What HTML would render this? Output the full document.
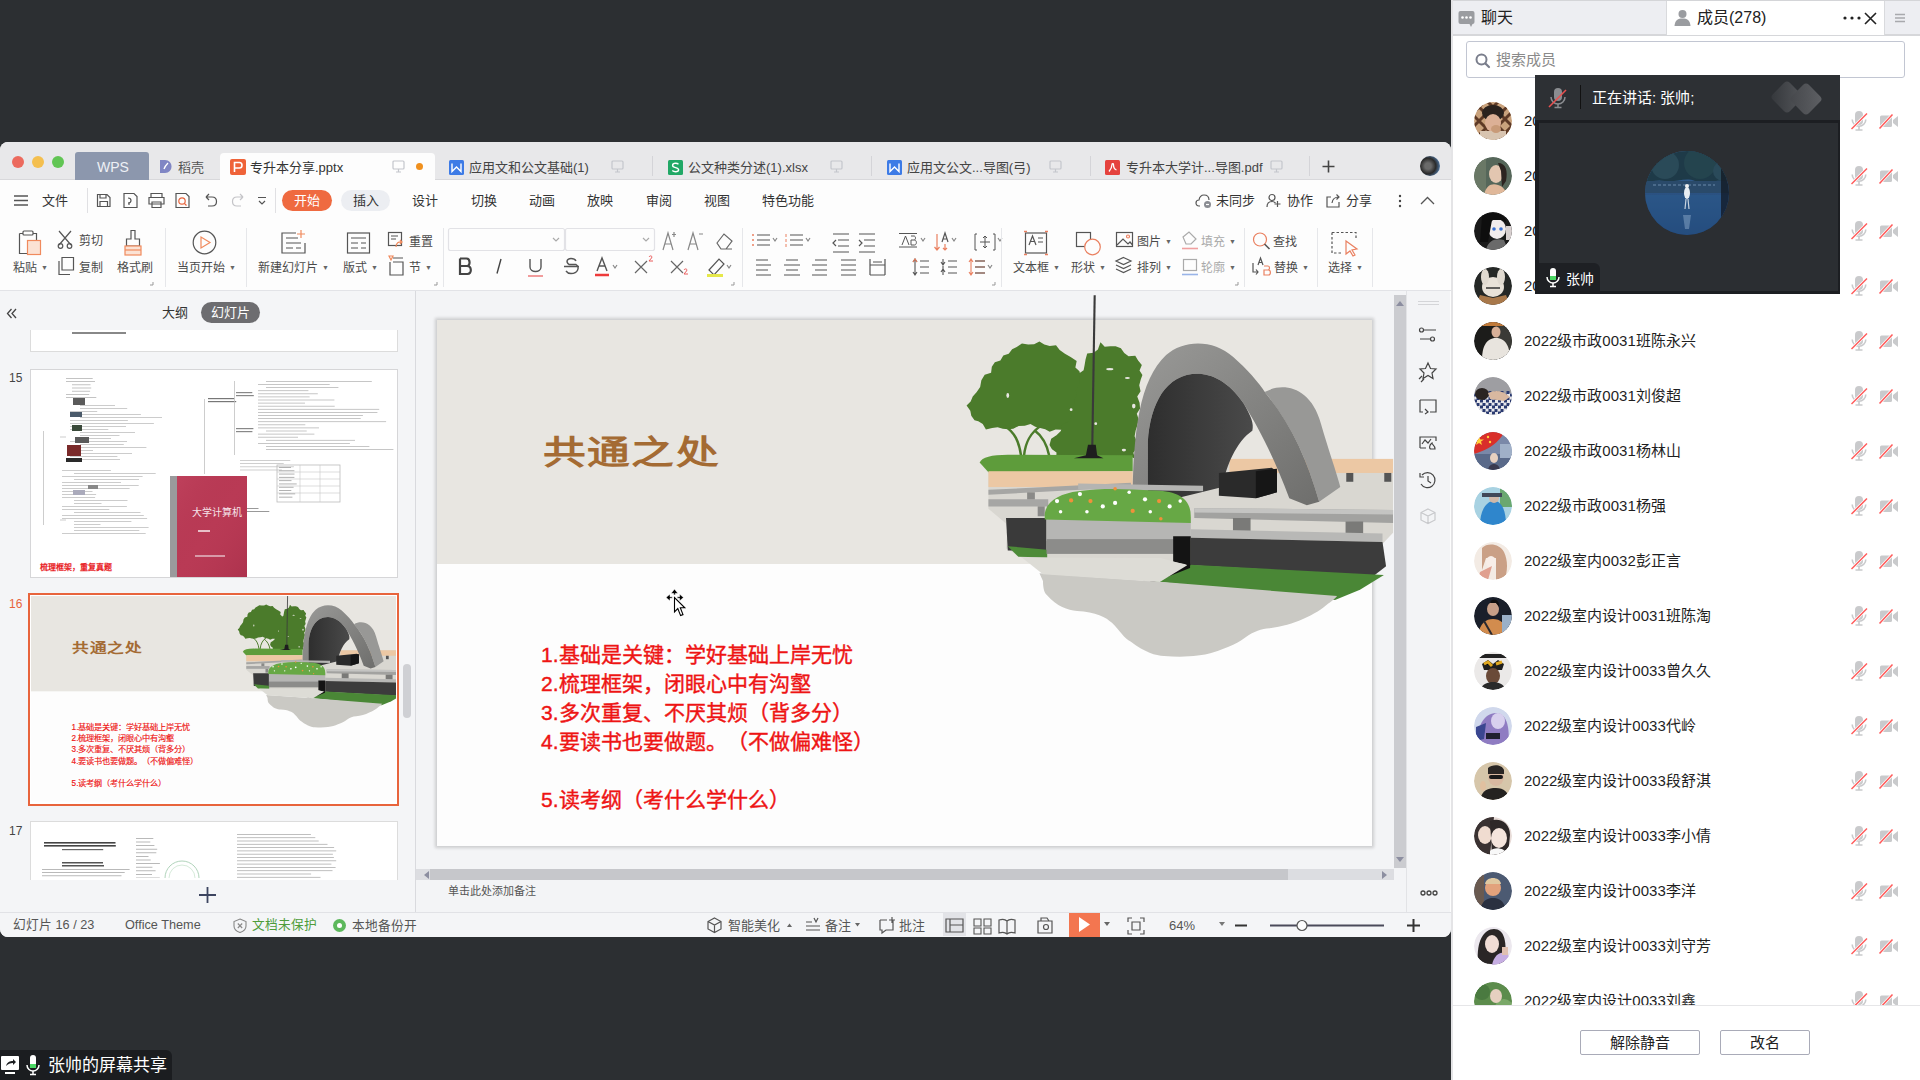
<!DOCTYPE html>
<html lang="zh-CN"><head><meta charset="utf-8">
<style>
*{box-sizing:border-box;margin:0;padding:0}
html,body{text-spacing-trim:space-all;width:1920px;height:1080px;overflow:hidden;background:#2c2f32;font-family:"Liberation Sans",sans-serif;color:#333}
.a{position:absolute}
.t{position:absolute;white-space:nowrap;line-height:1}
/* WPS window */
#win{position:absolute;left:0;top:142px;width:1451px;height:795px;background:#fdfdfd;border-radius:8px 8px 8px 8px;overflow:hidden}
#tabbar{left:0;top:0;width:1451px;height:38px;background:#e9e9eb;border-bottom:1px solid #d9d9dc}
.dot{position:absolute;width:12px;height:12px;border-radius:50%;top:14px}
.tab{position:absolute;top:11px;height:27px;font-size:13px;color:#444}
.sep{position:absolute;width:1px;background:#ddd}
#ribbon{left:0;top:38px;width:1451px;height:111px;background:#fdfdfd;border-bottom:1px solid #e3e4e8}
.m{font-size:13px;color:#333}
.rb{font-size:12px;color:#4a4a4a}
#leftp{left:0;top:150px;width:415px;height:620px;background:#f4f5f7;border-right:1px solid #dcdde1}
#canvas{left:416px;top:150px;width:990px;height:620px;background:#f3f4f6}
#rtool{left:1406px;top:150px;width:45px;height:620px;background:#f3f4f6;border-left:1px solid #e1e2e6}
#status{left:0;top:770px;width:1451px;height:25px;background:#f5f6f8;border-top:1px solid #e3e4e8}
.dd{font-size:7px;color:#666;vertical-align:2px;margin-left:4px}
.st{font-size:12.7px;color:#555}
/* right panel */
#rp{left:1451px;top:0;width:469px;height:1080px;background:#fff;}

.av{position:absolute;left:23px;top:0;width:38px;height:38px;border-radius:50%;overflow:hidden}
.nm{position:absolute;left:73px;font-size:15px;color:#1f1f1f;white-space:nowrap;line-height:1}
</style></head><body>

<svg width="0" height="0" style="position:absolute">
 <defs>
  <g id="ic">
   <rect x="15" y="10" width="8" height="14" rx="4" fill="#c9cacc"/>
   <path d="M12.2 18.5a6.8 6.8 0 0 0 13.6 0" fill="none" stroke="#c9cacc" stroke-width="1.6"/>
   <path d="M19 25.5V28.5M15.5 29H22.5" stroke="#c9cacc" stroke-width="1.6"/>
   <path d="M11.5 28L27 12.5" stroke="#fff" stroke-width="3"/>
   <path d="M11.5 28L27 12.5" stroke="#ff5a5a" stroke-width="1.5"/>
   <rect x="40" y="14.5" width="12" height="11.5" rx="1.5" fill="#c9cacc"/>
   <path d="M53 19L58 15V26L53 22Z" fill="#c9cacc"/>
   <path d="M39.5 27.5L52.5 13.5" stroke="#fff" stroke-width="3"/>
   <path d="M39.5 27.5L52.5 13.5" stroke="#ff5a5a" stroke-width="1.5"/>
  </g>
 </defs>
</svg>
<svg width="0" height="0" style="position:absolute">
 <defs>
  <filter id="grain" x="0" y="0" width="100%" height="100%"><feTurbulence type="fractalNoise" baseFrequency="0.9" numOctaves="1" result="n"/><feColorMatrix type="saturate" values="0"/><feComponentTransfer><feFuncA type="linear" slope="0.25"/></feComponentTransfer><feComposite in2="SourceGraphic" operator="in"/><feBlend in="SourceGraphic" mode="multiply"/></filter>
  <linearGradient id="archg" x1="0" y1="0" x2="1" y2="1"><stop offset="0" stop-color="#9a9a98"/><stop offset="1" stop-color="#6e6e6c"/></linearGradient>
  <linearGradient id="darkg" x1="0" y1="0" x2="1" y2="0"><stop offset="0" stop-color="#2e2e2e"/><stop offset="1" stop-color="#4a4a4a"/></linearGradient>
  <linearGradient id="bookg" x1="0" y1="0" x2="1" y2="1"><stop offset="0" stop-color="#c24560" stop-opacity=".6"/><stop offset=".5" stop-color="#b0354f" stop-opacity="0"/><stop offset="1" stop-color="#a02a45" stop-opacity=".5"/></linearGradient>
  <g id="illus">
   <!-- base ground -->
   <path d="M95 515 L505 515 L505 480 L1245 480 L1245 690 L1212 725 L1225 785 L1190 812 L190 760 L145 735 L150 668 L95 622 Z" fill="#d9d7d1"/>
   <!-- trees -->
   <path d="M32.9 328.1 L44.5 317.0 L50.4 302.4 L61.2 290.8 L71.5 276.0 L74.9 256.6 L84.4 241.1 L102.6 235.2 L104.7 218.1 L113.2 205.4 L129.0 200.7 L137.3 185.9 L152.7 181.4 L162.3 168.5 L175.4 161.9 L190.2 151.7 L207.9 154.8 L224.8 154.5 L239.9 146.3 L253.8 154.7 L269.2 159.3 L287.1 156.8 L297.5 170.7 L312.5 181.3 L328.6 190.6 L345.8 202.0 L342.1 220.3 L353.7 230.8 L357.1 244.9 L359.5 259.6 L366.1 272.9 L367.9 287.8 L379.5 300.1 L372.3 314.6 L375.8 330.1 L367.4 344.4 L368.5 356.0 L363.4 374.9 L350.7 385.2 L335.5 395.9 L318.0 387.5 L302.6 396.9 L286.0 396.2 L269.1 402.6 L256.3 395.4 L242.0 392.5 L228.1 388.5 L214.6 380.9 L198.4 385.9 L180.8 386.6 L165.5 394.6 L151.0 396.1 L135.8 394.6 L121.1 390.2 L105.4 392.1 L87.9 396.2 L78.9 380.8 L66.2 372.8 L55.4 370.2 L46.3 357.7 L43.5 343.1Z" fill="#4b7b2b"/><path d="M351.3 238.3 L365.5 228.2 L368.4 212.9 L371.0 197.5 L375.7 180.6 L394.1 178.2 L406.1 169.3 L413.4 148.4 L425.5 161.6 L441.3 159.8 L456.6 159.7 L471.5 165.5 L481.0 179.2 L493.3 188.4 L512.3 186.6 L520.4 200.3 L531.0 212.8 L524.5 228.6 L532.6 241.5 L527.7 255.1 L523.6 270.9 L527.4 288.0 L517.9 302.8 L524.6 320.3 L525.9 336.7 L516.6 351.8 L522.5 368.8 L518.2 384.5 L513.3 400.0 L510.5 415.6 L516.8 431.2 L518.4 446.8 L506.9 462.4 L512.0 480.6 L497.2 471.6 L482.4 472.4 L467.6 479.7 L452.8 478.6 L438.0 477.7 L423.2 476.0 L408.4 476.7 L393.6 477.2 L378.8 476.3 L364.0 471.8 L349.2 477.9 L334.4 479.0 L319.6 474.9 L304.8 481.7 L287.6 479.4 L288.5 462.0 L275.6 452.5 L268.5 440.4 L273.3 422.4 L288.4 412.6 L300.9 400.7 L304.6 382.6 L321.3 374.3 L331.8 360.4 L327.1 343.7 L338.0 330.4 L338.9 314.9 L345.0 300.5 L343.6 284.6 L351.6 270.6 L355.1 255.7Z" fill="#4b7b2b"/><ellipse cx="150" cy="300" rx="4" ry="7" fill="#e8e6e1"/><ellipse cx="330" cy="340" rx="4" ry="4" fill="#e8e6e1"/><ellipse cx="440" cy="225" rx="10" ry="3" fill="#e8e6e1"/><ellipse cx="490" cy="250" rx="7" ry="3" fill="#e8e6e1"/><ellipse cx="508" cy="330" rx="5" ry="7" fill="#e8e6e1"/><ellipse cx="400" cy="380" rx="4" ry="4" fill="#e8e6e1"/><ellipse cx="480" cy="455" rx="6" ry="4" fill="#e8e6e1"/><path d="M188 472 C182 430 170 405 140 385 M196 472 C200 430 215 405 245 385 M268 472 C262 440 248 415 225 398" stroke="#4b7b2b" stroke-width="7" fill="none"/>
   <path d="M70 490 Q80 468 150 468 L505 470 L505 515 L95 518 Z" fill="#5e9c3b"/>
   <!-- flagpole -->
   <path d="M397 15 L390 455" stroke="#3a3a3a" stroke-width="6"/>
   <path d="M378 440H400L404 470L422 478H338L372 470Z" fill="#1e1e1e"/>
   <!-- sand -->
   <rect x="95" y="515" width="410" height="45" fill="#ecc8a4"/>
   <rect x="780" y="480" width="465" height="40" fill="#ecc8a4"/>
   <!-- arch -->
   <path d="M880 290 C930 262 1010 272 1040 380 C1060 450 1085 520 1095 560 L1035 602 C1000 480 955 380 880 290 Z" fill="#989896"/>
   <path d="M505 615 C505 400 525 255 600 185 C650 140 735 140 790 190 C830 225 862 262 882 292 C955 380 1000 480 1035 602 L1000 612 L950 592 C905 470 862 392 820 322 C780 262 730 238 690 238 C600 238 555 322 548 432 L548 615 Z" fill="url(#archg)"/>
   <path d="M548 612 L548 432 C555 322 600 238 690 238 C730 238 780 262 820 322 C842 360 850 380 845 400 C800 430 770 500 760 560 L700 575 Z" fill="url(#darkg)"/>
   <path d="M750 520 L900 505 L915 515 L915 575 L855 592 L750 585 Z" fill="#2a2a2a"/>
   <path d="M855 515 L915 508 L915 575 L855 592 Z" fill="#161616"/>
   <!-- rails -->
   <path d="M95 568 L500 548 L500 560 L95 582 Z" fill="#a6a6a4"/>
   <path d="M95 595 H265 V615 H95 Z" fill="#a6a6a4"/>
   <rect x="205" y="575" width="22" height="20" fill="#8a8a88"/>
   <rect x="235" y="615" width="20" height="28" fill="#8a8a88"/>
   <path d="M350 550 L705 556 L705 572 L350 566 Z" fill="#b4b4b2"/>
   <path d="M680 620 L1245 625 L1245 662 L680 648 Z" fill="#a2a2a0"/>
   <path d="M680 620 L1245 625 L1245 638 L680 632 Z" fill="#c4c4c2"/>
   <rect x="790" y="648" width="50" height="40" fill="#7a7a78"/>
   <rect x="1110" y="658" width="50" height="45" fill="#7a7a78"/>
   <rect x="1112" y="520" width="20" height="25" fill="#555"/><rect x="1220" y="520" width="20" height="25" fill="#555"/>
   <path d="M670 680 L1215 692 L1215 716 L670 704 Z" fill="#b8b8b6"/>
   <!-- dark ground -->
   <path d="M145 648 L260 648 L260 742 L150 740 Z" fill="#3a3a3a"/>
   <path d="M670 704 L1215 716 L1225 785 L1190 812 L670 782 Z" fill="#3c3c3c"/>
   <path d="M150 728 L262 738 L262 760 L180 758 Z" fill="#4d8b38"/>
   <path d="M554 827 L668 781 L1219 810 L1151 852 L1080 881 L582 830 Z" fill="#4a8736"/>
   <path d="M534 827 L668 776 L668 790 L554 835 Z" fill="#111"/>
   <!-- planter -->
   <rect x="260" y="645" width="410" height="68" fill="#b6b6b4"/>
   <rect x="260" y="708" width="362" height="42" fill="#8c8c8a"/>
   <path d="M620 700 L670 700 L670 782 L620 772 Z" fill="#141414"/>
   <path d="M255 642 C255 600 300 578 350 572 C420 562 500 566 560 570 C625 570 670 588 670 642 L670 662 L255 652 Z" fill="#67a845"/>
   <g fill="#fff"><circle cx="290" cy="600" r="6"/><circle cx="355" cy="580" r="6"/><circle cx="420" cy="615" r="6"/><circle cx="455" cy="605" r="6"/><circle cx="540" cy="595" r="6"/><circle cx="610" cy="615" r="6"/><circle cx="640" cy="600" r="5"/><circle cx="300" cy="630" r="5"/><circle cx="375" cy="630" r="5"/><circle cx="555" cy="630" r="5"/><circle cx="495" cy="575" r="5"/></g>
   <g fill="#f0903a"><circle cx="330" cy="598" r="6"/><circle cx="385" cy="600" r="6"/><circle cx="455" cy="565" r="5"/><circle cx="505" cy="628" r="6"/><circle cx="580" cy="600" r="6"/><circle cx="585" cy="650" r="5"/></g>
   <!-- gravel -->
   <path d="M240 805 L582 829 L1086 870 C1080 878 1070 885 1060 892 C1030 920 960 955 895 961 C870 962 850 970 827 986 C810 1000 780 1015 728 1032 C700 1040 650 1045 594 1040 C570 1040 540 1030 500 1000 C480 990 470 970 446 946 C430 930 400 915 347 912 C320 910 290 900 261 867 C255 862 250 850 250 827 Z" fill="#cac9c4"/>
   <path d="M190 760 L585 762 L660 782 L582 830 L250 808 Z" fill="#dddcd6"/>
  </g>
  <g id="slide">
   <rect x="0" y="0" width="935" height="526" fill="#fdfdfd"/>
   <rect x="0" y="0" width="935" height="244" fill="#e8e6e1"/>
   <text transform="translate(106,144) scale(1.22,0.95)" x="0" y="0" font-family="Liberation Serif,serif" font-weight="bold" font-size="35" letter-spacing="1.5" fill="#a46b33">共通之处</text>
   <g font-family="Liberation Sans,sans-serif" font-size="21" fill="#ee1414" stroke="#ee1414" stroke-width="0.4">
    <text x="104" y="342">1.基础是关键：学好基础上岸无忧</text>
    <text x="104" y="371">2.梳理框架，闭眼心中有沟壑</text>
    <text x="104" y="400">3.多次重复、不厌其烦（背多分）</text>
    <text x="104" y="429">4.要读书也要做题。（不做偏难怪）</text>
    <text x="104" y="487">5.读考纲（考什么学什么）</text>
   </g>
   <g transform="translate(518,-30) scale(0.35186)"><use href="#illus"/></g>
  </g>
 </defs>
</svg>
<!-- WPS window -->
<div class="a" style="left:0;top:142px;width:1451px;height:795px;background:#fdfdfd;border-radius:8px"></div>
<!-- tab bar -->
<div class="a" style="left:0;top:142px;width:1451px;height:38px;background:#e8e8ea;border-radius:8px 8px 0 0;border-bottom:1px solid #d8d8db"></div>
<div class="dot" style="left:12px;top:156px;background:#ec6a5e"></div>
<div class="dot" style="left:32px;top:156px;background:#f4bf4f"></div>
<div class="dot" style="left:52px;top:156px;background:#61c554"></div>
<div class="a" style="left:75px;top:152px;width:74px;height:28px;background:#8c97ad;border-radius:3px 3px 0 0"></div>
<div class="t" style="left:97px;top:160px;font-size:14px;color:#eef0f5">WPS</div>
<svg class="a" style="left:159px;top:159px" width="13" height="15" viewBox="0 0 13 15"><path d="M1 1H6C10 1 12.5 4 12.5 7.5S10 14 6 14H1Z" fill="#8086c4"/><path d="M5 10C6 7 8 5 9 4" stroke="#fff" stroke-width="1.3" fill="none"/></svg>
<div class="t" style="left:178px;top:161px;font-size:13px;color:#555">稻壳</div>
<div class="a" style="left:220px;top:153px;width:215px;height:28px;background:#fdfdfd;border-radius:4px 4px 0 0"></div>
<div class="a" style="left:230px;top:159px;width:16px;height:16px;background:#ef6339;border-radius:2px"></div>
<svg class="a" style="left:230px;top:159px" width="16" height="16" viewBox="0 0 16 16"><path d="M4.5 13V3.5H9.5C11.5 3.5 12 5 12 6.3S11.3 9 9.5 9H4.5" fill="none" stroke="#fff" stroke-width="1.6"/></svg>
<div class="t" style="left:250px;top:161px;font-size:13px;color:#333">专升本分享.pptx</div>
<svg class="a" style="left:392px;top:160px" width="13" height="13" viewBox="0 0 13 13"><rect x="1" y="1" width="11" height="8" rx="1" fill="none" stroke="#c4c6cc" stroke-width="1.2"/><path d="M6.5 9V12M4 12H9" stroke="#c4c6cc" stroke-width="1.2"/></svg>
<div class="a" style="left:416px;top:163px;width:7px;height:7px;border-radius:50%;background:#f0901e"></div>
<!-- tab 3 -->
<svg class="a" style="left:449px;top:160px" width="15" height="15" viewBox="0 0 15 15"><rect width="15" height="15" rx="1.5" fill="#3d7be6"/><path d="M3 3.5V11.5L7.5 7L12 11.5V3.5" fill="none" stroke="#fff" stroke-width="1.4"/></svg>
<div class="t" style="left:469px;top:161px;font-size:13px;color:#444">应用文和公文基础(1)</div>
<svg class="a" style="left:611px;top:160px" width="13" height="13" viewBox="0 0 13 13"><rect x="1" y="1" width="11" height="8" rx="1" fill="none" stroke="#c4c6cc" stroke-width="1.2"/><path d="M6.5 9V12M4 12H9" stroke="#c4c6cc" stroke-width="1.2"/></svg>
<div class="sep" style="left:652px;top:156px;height:20px;background:#d4d4d8"></div>
<!-- tab 4 -->
<svg class="a" style="left:668px;top:160px" width="15" height="15" viewBox="0 0 15 15"><rect width="15" height="15" rx="1.5" fill="#21a866"/><path d="M10.5 4.2C9.8 3.6 9 3.3 7.6 3.3C5.8 3.3 4.6 4.1 4.6 5.4C4.6 8.3 10.6 6.9 10.6 9.8C10.6 11.1 9.3 11.8 7.5 11.8C6 11.8 5 11.3 4.3 10.6" fill="none" stroke="#fff" stroke-width="1.4"/></svg>
<div class="t" style="left:688px;top:161px;font-size:13px;color:#444">公文种类分述(1).xlsx</div>
<svg class="a" style="left:830px;top:160px" width="13" height="13" viewBox="0 0 13 13"><rect x="1" y="1" width="11" height="8" rx="1" fill="none" stroke="#c4c6cc" stroke-width="1.2"/><path d="M6.5 9V12M4 12H9" stroke="#c4c6cc" stroke-width="1.2"/></svg>
<div class="sep" style="left:871px;top:156px;height:20px;background:#d4d4d8"></div>
<!-- tab 5 -->
<svg class="a" style="left:887px;top:160px" width="15" height="15" viewBox="0 0 15 15"><rect width="15" height="15" rx="1.5" fill="#3d7be6"/><path d="M3 3.5V11.5L7.5 7L12 11.5V3.5" fill="none" stroke="#fff" stroke-width="1.4"/></svg>
<div class="t" style="left:907px;top:161px;font-size:13px;color:#444">应用文公文...导图(弓)</div>
<svg class="a" style="left:1049px;top:160px" width="13" height="13" viewBox="0 0 13 13"><rect x="1" y="1" width="11" height="8" rx="1" fill="none" stroke="#c4c6cc" stroke-width="1.2"/><path d="M6.5 9V12M4 12H9" stroke="#c4c6cc" stroke-width="1.2"/></svg>
<div class="sep" style="left:1090px;top:156px;height:20px;background:#d4d4d8"></div>
<!-- tab 6 -->
<svg class="a" style="left:1105px;top:160px" width="15" height="15" viewBox="0 0 15 15"><rect width="15" height="15" rx="1.5" fill="#e5423e"/><path d="M4 11.5C6 9 7 7 7 4.5C7 3.5 8.5 3.5 8.5 4.5C8.5 7 10 9.5 11.5 10" fill="none" stroke="#fff" stroke-width="1.3"/></svg>
<div class="t" style="left:1126px;top:161px;font-size:13px;color:#444">专升本大学计...导图.pdf</div>
<svg class="a" style="left:1270px;top:160px" width="13" height="13" viewBox="0 0 13 13"><rect x="1" y="1" width="11" height="8" rx="1" fill="none" stroke="#c4c6cc" stroke-width="1.2"/><path d="M6.5 9V12M4 12H9" stroke="#c4c6cc" stroke-width="1.2"/></svg>
<div class="sep" style="left:1309px;top:156px;height:20px;background:#d4d4d8"></div>
<svg class="a" style="left:1322px;top:160px" width="13" height="13" viewBox="0 0 13 13"><path d="M6.5 0.5V12.5M0.5 6.5H12.5" stroke="#444" stroke-width="1.6"/></svg>
<div class="a" style="left:1420px;top:156px;width:20px;height:20px;border-radius:50%;background:radial-gradient(circle at 40% 50%,#6a6a6a 0 20%,#2a2a2a 50%,#5a8ac0 85%)"></div>
<!-- menu row -->
<svg class="a" style="left:14px;top:195px" width="14" height="11" viewBox="0 0 14 11"><path d="M0 1H14M0 5.5H14M0 10H14" stroke="#555" stroke-width="1.3"/></svg>
<div class="t m" style="left:42px;top:194px">文件</div>
<div class="sep" style="left:87px;top:188px;height:25px;background:#e0e0e3"></div>
<svg class="a" style="left:96px;top:192px" width="180" height="17" viewBox="0 0 180 17" fill="none" stroke="#555" stroke-width="1.2">
 <path d="M1.5 2.5H11L14 5.5V14.5H1.5Z M4 2.5V6H10V2.5 M4 14.5V9.5H11.5V14.5"/>
 <path d="M28 1.5H38L41 4.5V15.5H28Z M32 6C34 6 35 7 35 8.5S34 11 32 11 M33 11L33 13" stroke="#555"/>
 <path d="M55 5.5V1.5H66V5.5 M53 5.5H68V12H53Z M56 10H65V15.5H56Z"/>
 <path d="M80 1.5H90L93 4.5V15.5H80Z"/><circle cx="86" cy="9" r="3.2" stroke="#e8643c"/><path d="M88.3 11.3L90.5 13.5" stroke="#e8643c"/>
 <path d="M110 5H116C119 5 120.5 7 120.5 9.5S119 14 116 14H112 M110 5L113 2M110 5L113 8"/>
 <path d="M147 5H141C138 5 136.5 7 136.5 9.5S138 14 141 14H145 M147 5L144 2M147 5L144 8" stroke="#c4c4c8"/>
 <path d="M162 5.5H170M163 9L166 12L169 9" stroke="#555"/>
</svg>
<div class="sep" style="left:275px;top:188px;height:25px;background:#e0e0e3"></div>
<div class="a" style="left:282px;top:190px;width:50px;height:21px;border-radius:11px;background:#ef6a40"></div>
<div class="t m" style="left:294px;top:194px;color:#fff">开始</div>
<div class="a" style="left:341px;top:190px;width:49px;height:21px;border-radius:11px;background:#eceef2"></div>
<div class="t m" style="left:353px;top:194px">插入</div>
<div class="t m" style="left:412px;top:194px">设计</div>
<div class="t m" style="left:471px;top:194px">切换</div>
<div class="t m" style="left:529px;top:194px">动画</div>
<div class="t m" style="left:587px;top:194px">放映</div>
<div class="t m" style="left:646px;top:194px">审阅</div>
<div class="t m" style="left:704px;top:194px">视图</div>
<div class="t m" style="left:762px;top:194px">特色功能</div>
<svg class="a" style="left:1195px;top:193px" width="18" height="16" viewBox="0 0 18 16" fill="none" stroke="#555" stroke-width="1.2"><path d="M5 13H4C2 13 1 11.5 1 10S2 7 4 7C4.5 4 6.5 2 9 2C12 2 14 4 14 7"/><circle cx="12.5" cy="11.5" r="3.5" fill="#8a8c92" stroke="none"/><path d="M11 11.5H14" stroke="#fff"/></svg>
<div class="t m" style="left:1216px;top:194px">未同步</div>
<svg class="a" style="left:1266px;top:193px" width="15" height="15" viewBox="0 0 15 15" fill="none" stroke="#555" stroke-width="1.2"><circle cx="6" cy="4.5" r="3"/><path d="M1 14C1 10 3 8.5 6 8.5C7.5 8.5 8.5 9 9.5 10"/><path d="M11.5 8V14M8.5 11H14.5"/></svg>
<div class="t m" style="left:1287px;top:194px">协作</div>
<svg class="a" style="left:1325px;top:193px" width="16" height="15" viewBox="0 0 16 15" fill="none" stroke="#555" stroke-width="1.2"><path d="M6 4H2V14H14V9"/><path d="M7 10C7.5 6 10 4 14 4M11.5 1.5L14 4L11.5 6.5"/></svg>
<div class="t m" style="left:1346px;top:194px">分享</div>
<svg class="a" style="left:1398px;top:194px" width="4" height="14" viewBox="0 0 4 14"><circle cx="2" cy="2" r="1.2" fill="#444"/><circle cx="2" cy="7" r="1.2" fill="#444"/><circle cx="2" cy="12" r="1.2" fill="#444"/></svg>
<svg class="a" style="left:1420px;top:196px" width="15" height="9" viewBox="0 0 15 9"><path d="M1 8L7.5 1.5L14 8" fill="none" stroke="#555" stroke-width="1.3"/></svg>
<!-- ribbon -->
<div class="a" style="left:0;top:290px;width:1451px;height:1px;background:#e2e3e7"></div>
<svg class="a" style="left:0;top:222px" width="1451" height="68" viewBox="0 222 1451 68" fill="none" stroke="#555" stroke-width="1.2">
 <!-- paste -->
 <path d="M19.5 233.5H23M33 233.5H36.5V240 M19.5 233.5V253.5H27" />
 <rect x="23" y="231" width="10" height="4" rx="1"/>
 <rect x="27.5" y="240.5" width="13" height="14" fill="#fbe2d4" stroke="#f08a5d"/>
 <!-- cut -->
 <path d="M59 231L71 245M71 231L59 245"/><circle cx="60.5" cy="246" r="2.3"/><circle cx="69.5" cy="246" r="2.3"/>
 <!-- copy -->
 <path d="M62 257.5H73.5V270H62Z M59 261V274.5H70"/>
 <!-- format brush -->
 <path d="M131 230.5H135V239H139.5V246H126.5V239H131Z" />
 <rect x="125" y="246" width="16" height="9" fill="#fbe2d4" stroke="#f08a5d"/>
 <path d="M125 250H141" stroke="#f08a5d"/>
 <path d="M153 282V285H150" stroke="#999" stroke-width="1"/>
 <!-- play -->
 <circle cx="204.5" cy="242.5" r="11.3"/>
 <path d="M201 237V248L210 242.5Z" stroke="#f08a5d"/>
 <!-- new slide -->
 <path d="M296 233H282V253H305V243"/>
 <path d="M286 238H298M286 243H301M286 248H293M296 248H301"/>
 <path d="M301 230V238M297 234H305" stroke="#f08a5d"/>
 <!-- layout -->
 <rect x="347.5" y="233" width="22" height="20"/><path d="M351 238H366M351 243H358M361 243H366M351 248H358M361 248H366"/>
 <!-- reset -->
 <rect x="388.5" y="232.5" width="13" height="13"/><path d="M391 236H398M391 239H396"/><path d="M396 247C396 243 398.5 241.5 402 242M400 240L402 242L400 244" stroke="#f08a5d"/>
 <!-- section -->
 <path d="M393 258H403M390 262V275H403V262H393" /><path d="M389 256L393 256L391 260Z" stroke="#f08a5d"/>
 <path d="M437 282V285H434" stroke="#999" stroke-width="1"/>
 <!-- font combos -->
 <rect x="448.5" y="228.5" width="116" height="22" rx="2" stroke="#e2e2e6"/>
 <rect x="565.5" y="228.5" width="89" height="22" rx="2" stroke="#e2e2e6"/>
 <path d="M553 238L556 241L559 238M643 238L646 241L649 238" stroke="#aaa"/>
 <path d="M663 250L668 233L673 250M665 244H671M674 232V237M672 234.5H676" stroke="#888"/>
 <path d="M688 250L693 233L698 250M690 244H696M699 234H703" stroke="#888"/>
 <path d="M717 243L724 234L732 241L726 249H721Z M721 249H732" stroke="#666"/>
 <!-- BIUS -->
 <path d="M460 258.5V274H467.5C472 274 472 266 467 266H460M467 266C470.5 266 470.5 258.5 466.5 258.5H460" stroke="#444" stroke-width="2.2"/>
 <path d="M501 259L497 273.5" stroke="#444" stroke-width="1.4"/>
 <path d="M530 259V267C530 273 541 273 541 267V259" stroke="#555" stroke-width="1.4"/><path d="M528 276H543" stroke="#ea5c5c"/>
 <path d="M576 261C575 259 573 258.5 571 258.5C567 258.5 565.5 262 569 264.5H576C580 267 578 273.5 571 273.5C569 273.5 567 272.5 566 271M564 266.5H579" stroke="#555" stroke-width="1.4"/>
 <path d="M597 271L602 258L607 271M599 266H605" stroke="#555" stroke-width="1.4"/><path d="M595 275H609" stroke="#ee3b3b" stroke-width="2.5"/>
 <path d="M613 265L615 268L617 265" stroke="#888"/>
 <path d="M635 261L647 273M647 261L635 273" stroke="#666"/><path d="M649 257C650 255 653 256 651.5 258L649 261H653" stroke="#ea5c5c" stroke-width="1"/>
 <path d="M671 261L683 273M683 261L671 273" stroke="#666"/><path d="M684 270C685 268 688 269 686.5 271L684 274H688" stroke="#ea5c5c" stroke-width="1"/>
 <path d="M709 270L719 259L724 264L714 275Z" stroke="#555"/><path d="M707 275.5H723" stroke="#e6e84a" stroke-width="3"/>
 <path d="M727 265L729 268L731 265" stroke="#888"/>
 <path d="M734 282V285H731" stroke="#999" stroke-width="1"/>
 <!-- paragraph -->
 <path d="M757 235H770M757 240H770M757 245H770" /><path d="M752 235H754M752 240H754M752 245H754" stroke="#ea8060" stroke-width="1.6"/><path d="M773 238L775 241L777 238" stroke="#888"/>
 <path d="M790 235H803M790 240H803M790 245H803"/><path d="M786 234V237M786 239V242M786 244V247" stroke="#ea8060" stroke-width="1"/><path d="M806 238L808 241L810 238" stroke="#888"/>
 <path d="M833 234H849M838 240H849M838 246H849M833 252H849M836 240L833 243L836 246" />
 <path d="M859 234H875M864 240H875M864 246H875M859 252H875M859 240L862 243L859 246" />
 <path d="M899 233.5H917M902 245L905.5 236L909 245M911 236H914C916 236 916 240 914 240H911V245H914.5C917 245 917 240 914.5 240M899 247H917" stroke-width="1"/><path d="M921 238L923 241L925 238" stroke="#888"/>
 <path d="M937 234V250M934.5 247L937 250L939.5 247" stroke="#ea8060"/><path d="M942 242L945 233L948 242M943 239H947" /><path d="M945 244V250M943 248L945 250L947 248" stroke="#ea8060"/><path d="M952 238L954 241L956 238" stroke="#888"/>
 <path d="M977 234H975V250H977M993 234H995V250H993M980 242H990M985 236V248M983 238L985 236L987 238M983 246L985 248L987 246" stroke-width="1"/><path d="M998 238L1000 241L1002 238" stroke="#888"/>
 <path d="M756 260H768M756 265H771M756 270H768M756 275H771"/>
 <path d="M786 260H798M784 265H800M786 270H798M784 275H800"/>
 <path d="M815 260H827M812 265H827M815 270H827M812 275H827"/>
 <path d="M841 260H856M841 265H856M841 270H856M841 275H856"/>
 <path d="M870 259V275M885 259V275M870 275H885M870 265H885M873 262H882"/>
 <path d="M915 259V275M913 262L915 259L917 262M913 272L915 275L917 272M920 261H929M920 267H929M920 273H929" stroke-width="1.1"/><path d="M913 262L915 259L917 262" stroke="#ea8060"/>
 <path d="M943 259V275M941 262L943 265L945 262M941 272L943 269L945 272M948 261H957M948 267H957M948 273H957" stroke-width="1.1"/>
 <path d="M971 259V275M969 262L971 259L973 262M969 272L971 275L973 272M975 261H985M975 267H985M975 273H985" stroke="#ea8060" stroke-width="1.1"/><path d="M975 261H985M975 267H985M975 273H985"/><path d="M988 265L990 268L992 265" stroke="#888"/>
 <path d="M995 282V285H992" stroke="#999" stroke-width="1"/>
 <!-- text box -->
 <rect x="1025.5" y="233" width="21" height="20"/><path d="M1029 245L1032.5 236L1036 245M1030.5 241.5H1034.5M1038 238H1043M1038 242H1043" />
 <path d="M1024 231.5H1027M1045 231.5H1048M1024 254.5H1027M1045 254.5H1048" stroke="#ea8060" stroke-width="1.6"/>
 <!-- shape -->
 <rect x="1076.5" y="232.5" width="14" height="14"/><circle cx="1092.5" cy="247" r="7.8" fill="#fdfdfd" stroke="#ea8060"/>
 <!-- picture/arrange -->
 <rect x="1116.5" y="232.5" width="16" height="14"/><path d="M1117 245L1123 239L1128 244L1130 242L1132.5 245" /><circle cx="1128" cy="236.5" r="1.5" stroke="#ea8060"/>
 <path d="M1123.5 257.5L1131 261L1123.5 264.5L1116 261Z M1116 265L1123.5 268.5L1131 265 M1116 269L1123.5 272.5L1131 269"/>
 <path d="M1183 237L1189 232L1196 239L1191 244H1186Z" stroke="#aaa"/><path d="M1182 248.5H1198" stroke="#f0a0a0" stroke-width="1.6"/>
 <rect x="1183.5" y="259.5" width="13" height="11" stroke="#aaa"/><path d="M1182 274.5H1198" stroke="#99b4e8" stroke-width="1.6"/>
 <path d="M1238 282V285H1235" stroke="#999" stroke-width="1"/>
 <!-- find/replace -->
 <circle cx="1260" cy="239.5" r="6.5" stroke="#ea8060"/><path d="M1264.5 244L1269.5 249" stroke="#555" stroke-width="1.6"/>
 <path d="M1253 263V272H1258M1256 269.5L1258 272L1256 274.5"/><path d="M1258 265L1260.5 258L1263 265M1259 262.5H1262" stroke="#555"/><path d="M1264 266H1268C1270 266 1270 270 1268 270H1264V275H1268.5C1271 275 1271 270 1268.5 270" stroke="#ea8060"/>
 <!-- select -->
 <path d="M1332 232.5H1356V240M1332 232.5V253H1342" stroke="#555" stroke-dasharray="2.5 2"/>
 <path d="M1346 241L1357 249L1352 250L1355 255L1353 256L1350 251L1346 254Z" stroke="#ea8060" fill="#fdfdfd"/>
 <!-- separators -->
 <path d="M165.5 228V287M246.5 228V287M443.5 228V287M742.5 228V287M1001.5 228V287M1244.5 228V287M1317.5 228V287M1372.5 228V287" stroke="#e6e7ea" stroke-width="1"/>
</svg>
<div class="t rb" style="left:13px;top:262px">粘贴<span class="dd">▼</span></div>
<div class="t rb" style="left:79px;top:235px">剪切</div>
<div class="t rb" style="left:79px;top:262px">复制</div>
<div class="t rb" style="left:117px;top:262px">格式刷</div>
<div class="t rb" style="left:177px;top:262px">当页开始<span class="dd">▼</span></div>
<div class="t rb" style="left:258px;top:262px">新建幻灯片<span class="dd">▼</span></div>
<div class="t rb" style="left:343px;top:262px">版式<span class="dd">▼</span></div>
<div class="t rb" style="left:409px;top:236px">重置</div>
<div class="t rb" style="left:409px;top:262px">节<span class="dd">▼</span></div>
<div class="t rb" style="left:1013px;top:262px">文本框<span class="dd">▼</span></div>
<div class="t rb" style="left:1071px;top:262px">形状<span class="dd">▼</span></div>
<div class="t rb" style="left:1137px;top:236px">图片<span class="dd">▼</span></div>
<div class="t rb" style="left:1137px;top:262px">排列<span class="dd">▼</span></div>
<div class="t rb" style="left:1201px;top:236px;color:#aaa">填充<span class="dd">▼</span></div>
<div class="t rb" style="left:1201px;top:262px;color:#aaa">轮廓<span class="dd">▼</span></div>
<div class="t rb" style="left:1273px;top:236px">查找</div>
<div class="t rb" style="left:1274px;top:262px">替换<span class="dd">▼</span></div>
<div class="t rb" style="left:1328px;top:262px">选择<span class="dd">▼</span></div>
<!-- left panel -->
<div class="a" style="left:0;top:291px;width:415px;height:621px;background:#f4f5f7"></div>
<div class="a" style="left:415px;top:291px;width:1px;height:621px;background:#d9dade"></div>
<svg class="a" style="left:6px;top:308px" width="11" height="11" viewBox="0 0 11 11"><path d="M5.5 1L1.5 5.5L5.5 10M10 1L6 5.5L10 10" fill="none" stroke="#444" stroke-width="1.3"/></svg>
<div class="t" style="left:162px;top:306px;font-size:13px;color:#333">大纲</div>
<div class="a" style="left:201px;top:302px;width:59px;height:21px;border-radius:11px;background:#6d6d70"></div>
<div class="t" style="left:211px;top:306px;font-size:13px;color:#fff">幻灯片</div>
<div class="a" style="left:0;top:330px;width:415px;height:550px;overflow:hidden">
 <div class="a" style="left:30px;top:-30px;width:368px;height:52px;background:#fff;border:1px solid #dcdcdc"></div>
  <div class="t" style="left:9px;top:42px;font-size:12px;color:#444">15</div>
 <div class="a" style="left:30px;top:39px;width:368px;height:209px;background:#fff;border:1px solid #d6d6d8"></div>
 <div class="t" style="left:9px;top:268px;font-size:12px;color:#e8643c">16</div>
 <div class="a" style="left:28px;top:263px;width:371px;height:213px;border:2px solid #e8643c;background:#fff"></div>
 <svg class="a" style="left:31px;top:266px;overflow:hidden" width="365" height="207" viewBox="0 0 935 530"><use href="#slide"/></svg>
 <div class="t" style="left:9px;top:495px;font-size:12px;color:#444">17</div>
 <div class="a" style="left:30px;top:491px;width:368px;height:80px;background:#fff;border:1px solid #dcdcdc"></div>
 </div>
<svg class="a" style="left:0;top:0" width="415" height="1080" viewBox="0 0 415 1080"><defs><clipPath id="c15"><rect x="31" y="370" width="366" height="207"/></clipPath><clipPath id="c17"><rect x="31" y="822" width="366" height="56"/></clipPath></defs><g clip-path="url(#c15)"><rect x="66.0" y="378.0" width="26.7" height="0.8" fill="#b4b4b4"/><rect x="66.0" y="381.2" width="29.0" height="0.8" fill="#b4b4b4"/><rect x="72.0" y="384.4" width="18.5" height="0.8" fill="#b4b4b4"/><rect x="72.0" y="387.6" width="19.2" height="0.8" fill="#b4b4b4"/><rect x="72.0" y="390.8" width="18.1" height="0.8" fill="#b4b4b4"/><rect x="66.0" y="394.0" width="23.2" height="0.8" fill="#b4b4b4"/><rect x="66.0" y="397.2" width="30.3" height="0.8" fill="#b4b4b4"/><rect x="80.0" y="405.0" width="35.0" height="0.8" fill="#c0c0c0"/><rect x="80.0" y="408.0" width="47.2" height="0.8" fill="#c0c0c0"/><rect x="70.0" y="411.0" width="27.2" height="0.8" fill="#c0c0c0"/><rect x="80.0" y="414.0" width="60.9" height="0.8" fill="#c0c0c0"/><rect x="80.0" y="417.0" width="82.0" height="0.8" fill="#c0c0c0"/><rect x="70.0" y="420.0" width="57.9" height="0.8" fill="#c0c0c0"/><rect x="70.0" y="423.0" width="83.9" height="0.8" fill="#c0c0c0"/><rect x="70.0" y="426.0" width="56.0" height="0.8" fill="#c0c0c0"/><rect x="70.0" y="429.0" width="38.3" height="0.8" fill="#c0c0c0"/><rect x="80.0" y="432.0" width="55.0" height="0.8" fill="#c0c0c0"/><rect x="80.0" y="435.0" width="39.5" height="0.8" fill="#c0c0c0"/><rect x="80.0" y="438.0" width="31.0" height="0.8" fill="#c0c0c0"/><rect x="70.0" y="441.0" width="57.0" height="0.8" fill="#c0c0c0"/><rect x="80.0" y="444.0" width="43.8" height="0.8" fill="#c0c0c0"/><rect x="80.0" y="447.0" width="66.4" height="0.8" fill="#c0c0c0"/><rect x="70.0" y="450.0" width="23.0" height="0.8" fill="#c0c0c0"/><rect x="80.0" y="453.0" width="52.0" height="0.8" fill="#c0c0c0"/><rect x="70.0" y="456.0" width="47.4" height="0.8" fill="#c0c0c0"/><rect x="70.0" y="459.0" width="50.0" height="0.8" fill="#c0c0c0"/><rect x="62.0" y="470.0" width="48.9" height="0.8" fill="#c0c0c0"/><rect x="74.0" y="473.0" width="81.7" height="0.8" fill="#c0c0c0"/><rect x="62.0" y="476.0" width="80.6" height="0.8" fill="#c0c0c0"/><rect x="74.0" y="479.0" width="65.0" height="0.8" fill="#c0c0c0"/><rect x="62.0" y="482.0" width="59.0" height="0.8" fill="#c0c0c0"/><rect x="62.0" y="485.0" width="76.7" height="0.8" fill="#c0c0c0"/><rect x="62.0" y="488.0" width="67.6" height="0.8" fill="#c0c0c0"/><rect x="62.0" y="491.0" width="30.5" height="0.8" fill="#c0c0c0"/><rect x="62.0" y="494.0" width="34.1" height="0.8" fill="#c0c0c0"/><rect x="62.0" y="497.0" width="33.1" height="0.8" fill="#c0c0c0"/><rect x="74.0" y="500.0" width="53.5" height="0.8" fill="#c0c0c0"/><rect x="74.0" y="503.0" width="27.5" height="0.8" fill="#c0c0c0"/><rect x="62.0" y="506.0" width="64.9" height="0.8" fill="#c0c0c0"/><rect x="62.0" y="509.0" width="47.3" height="0.8" fill="#c0c0c0"/><rect x="74.0" y="512.0" width="66.5" height="0.8" fill="#c0c0c0"/><rect x="62.0" y="515.0" width="81.8" height="0.8" fill="#c0c0c0"/><rect x="62.0" y="518.0" width="85.1" height="0.8" fill="#c0c0c0"/><rect x="74.0" y="521.0" width="57.4" height="0.8" fill="#c0c0c0"/><rect x="74.0" y="524.0" width="26.5" height="0.8" fill="#c0c0c0"/><rect x="74.0" y="527.0" width="74.6" height="0.8" fill="#c0c0c0"/><rect x="74.0" y="530.0" width="65.3" height="0.8" fill="#c0c0c0"/><rect x="62.0" y="533.0" width="83.7" height="0.8" fill="#c0c0c0"/><rect x="266.0" y="381.0" width="105.8" height="0.8" fill="#b8b8b8"/><rect x="258.0" y="384.1" width="71.7" height="0.8" fill="#b8b8b8"/><rect x="266.0" y="387.2" width="72.4" height="0.8" fill="#b8b8b8"/><rect x="258.0" y="390.3" width="50.4" height="0.8" fill="#b8b8b8"/><rect x="258.0" y="393.4" width="59.8" height="0.8" fill="#b8b8b8"/><rect x="258.0" y="396.5" width="51.6" height="0.8" fill="#b8b8b8"/><rect x="258.0" y="399.6" width="76.4" height="0.8" fill="#b8b8b8"/><rect x="258.0" y="402.7" width="47.0" height="0.8" fill="#b8b8b8"/><rect x="258.0" y="405.8" width="76.7" height="0.8" fill="#b8b8b8"/><rect x="258.0" y="408.9" width="121.2" height="0.8" fill="#b8b8b8"/><rect x="258.0" y="412.0" width="119.4" height="0.8" fill="#b8b8b8"/><rect x="258.0" y="415.1" width="104.9" height="0.8" fill="#b8b8b8"/><rect x="258.0" y="418.2" width="102.7" height="0.8" fill="#b8b8b8"/><rect x="258.0" y="421.3" width="128.1" height="0.8" fill="#b8b8b8"/><rect x="258.0" y="424.4" width="47.3" height="0.8" fill="#b8b8b8"/><rect x="258.0" y="427.5" width="61.0" height="0.8" fill="#b8b8b8"/><rect x="266.0" y="430.6" width="40.7" height="0.8" fill="#b8b8b8"/><rect x="258.0" y="433.7" width="56.4" height="0.8" fill="#b8b8b8"/><rect x="258.0" y="436.8" width="40.0" height="0.8" fill="#b8b8b8"/><rect x="266.0" y="439.9" width="89.0" height="0.8" fill="#b8b8b8"/><rect x="258.0" y="443.0" width="91.9" height="0.8" fill="#b8b8b8"/><rect x="266.0" y="446.1" width="103.4" height="0.8" fill="#b8b8b8"/><rect x="266.0" y="449.2" width="127.4" height="0.8" fill="#b8b8b8"/><rect x="240.0" y="460.0" width="50.3" height="0.8" fill="#c4c4c4"/><rect x="240.0" y="463.2" width="43.7" height="0.8" fill="#c4c4c4"/><rect x="240.0" y="466.4" width="53.9" height="0.8" fill="#c4c4c4"/><rect x="240.0" y="469.6" width="41.9" height="0.8" fill="#c4c4c4"/><rect x="208.0" y="398.0" width="26.3" height="1.2" fill="#777"/><rect x="208.0" y="401.0" width="28.2" height="1.2" fill="#777"/><rect x="236.0" y="392.0" width="16.3" height="1.2" fill="#888"/><rect x="236.0" y="395.0" width="17.8" height="1.2" fill="#888"/><rect x="236.0" y="428.0" width="17.4" height="1.2" fill="#888"/><rect x="236.0" y="431.0" width="16.4" height="1.2" fill="#888"/><rect x="236.0" y="508.0" width="22.5" height="1.0" fill="#999"/><rect x="236.0" y="511.0" width="33.3" height="1.0" fill="#999"/><path d="M43.5 431V525M204.5 399V474M234.5 381V455M60 437H66M60 520H66" stroke="#c0c0c0" stroke-width="0.8"/><rect x="73" y="398" width="12" height="7" fill="#5a5a5a"/><rect x="70" y="412" width="12" height="5" fill="#4a5a6a"/><rect x="72" y="425" width="10" height="6" fill="#3a4a3a"/><rect x="75" y="437" width="14" height="6" fill="#5a5a5a"/><rect x="88" y="485" width="10" height="4" fill="#888"/><rect x="67" y="445" width="14" height="11" fill="#7a2a2a"/><rect x="66" y="458" width="16" height="4" fill="#2a2a2a"/><rect x="73" y="490" width="12" height="5" fill="#aab"/><rect x="277" y="465" width="63" height="37" fill="none" stroke="#bbb" stroke-width="0.8"/><path d="M277 472H340M277 479H340M277 486H340M277 493H340M300 465V502M320 465V502" stroke="#c8c8c8" stroke-width="0.6"/><rect x="279.0" y="467.0" width="12.0" height="0.9" fill="#aaa"/><rect x="279.0" y="470.3" width="15.4" height="0.9" fill="#aaa"/><rect x="279.0" y="473.6" width="15.5" height="0.9" fill="#aaa"/><rect x="279.0" y="476.9" width="15.4" height="0.9" fill="#aaa"/><rect x="279.0" y="480.2" width="12.5" height="0.9" fill="#aaa"/><rect x="279.0" y="483.5" width="17.7" height="0.9" fill="#aaa"/><rect x="279.0" y="486.8" width="14.6" height="0.9" fill="#aaa"/><rect x="279.0" y="490.1" width="12.3" height="0.9" fill="#aaa"/><rect x="279.0" y="493.4" width="16.2" height="0.9" fill="#aaa"/><rect x="279.0" y="496.7" width="13.4" height="0.9" fill="#aaa"/><rect x="170" y="476" width="77" height="101" fill="#b93a55"/><rect x="170" y="476" width="7" height="101" fill="#9a9a9c"/><rect x="177" y="476" width="70" height="101" fill="url(#bookg)"/><text x="192" y="516" font-size="10" fill="#f6e4ea" font-family="Liberation Serif,serif">大学计算机</text><rect x="198" y="530" width="12" height="2" fill="#e8c0c8"/><rect x="195" y="555" width="30" height="2" fill="#d89aa8"/><text x="40" y="570" font-size="8" fill="#e8262a" font-weight="bold" font-family="Liberation Sans,sans-serif">梳理框架，重复真题</text></g><g clip-path="url(#c17)"><rect x="44.0" y="842.0" width="71.5" height="1.6" fill="#444"/><rect x="44.0" y="845.0" width="71.8" height="1.6" fill="#444"/><rect x="62.0" y="849.0" width="41.2" height="1.2" fill="#666"/><rect x="62.0" y="862.0" width="41.0" height="1.5" fill="#555"/><rect x="62.0" y="865.0" width="42.0" height="1.5" fill="#555"/><rect x="42.0" y="869.0" width="87.6" height="0.8" fill="#a8a8a8"/><rect x="42.0" y="872.2" width="82.7" height="0.8" fill="#a8a8a8"/><rect x="42.0" y="875.4" width="79.5" height="0.8" fill="#a8a8a8"/><rect x="42.0" y="878.6" width="76.7" height="0.8" fill="#a8a8a8"/><rect x="136.0" y="838.0" width="17.3" height="0.8" fill="#a8a8a8"/><rect x="136.0" y="841.6" width="14.3" height="0.8" fill="#a8a8a8"/><rect x="136.0" y="845.2" width="18.4" height="0.8" fill="#a8a8a8"/><rect x="136.0" y="848.8" width="21.2" height="0.8" fill="#a8a8a8"/><rect x="136.0" y="852.4" width="20.3" height="0.8" fill="#a8a8a8"/><rect x="136.0" y="856.0" width="12.5" height="0.8" fill="#a8a8a8"/><rect x="136.0" y="859.6" width="14.7" height="0.8" fill="#a8a8a8"/><rect x="136.0" y="863.2" width="23.9" height="0.8" fill="#a8a8a8"/><rect x="136.0" y="866.8" width="16.4" height="0.8" fill="#a8a8a8"/><rect x="136.0" y="870.4" width="19.6" height="0.8" fill="#a8a8a8"/><rect x="136.0" y="874.0" width="16.0" height="0.8" fill="#a8a8a8"/><rect x="136.0" y="877.6" width="23.8" height="0.8" fill="#a8a8a8"/><rect x="237.0" y="834.0" width="73.9" height="0.8" fill="#b0b0b0"/><rect x="237.0" y="837.3" width="78.3" height="0.8" fill="#b0b0b0"/><rect x="237.0" y="840.6" width="81.7" height="0.8" fill="#b0b0b0"/><rect x="237.0" y="843.9" width="90.5" height="0.8" fill="#b0b0b0"/><rect x="237.0" y="847.2" width="97.1" height="0.8" fill="#b0b0b0"/><rect x="237.0" y="850.5" width="99.2" height="0.8" fill="#b0b0b0"/><rect x="237.0" y="853.8" width="95.9" height="0.8" fill="#b0b0b0"/><rect x="237.0" y="857.1" width="96.9" height="0.8" fill="#b0b0b0"/><rect x="237.0" y="860.4" width="99.2" height="0.8" fill="#b0b0b0"/><rect x="237.0" y="863.7" width="94.4" height="0.8" fill="#b0b0b0"/><rect x="237.0" y="867.0" width="98.6" height="0.8" fill="#b0b0b0"/><rect x="237.0" y="870.3" width="95.5" height="0.8" fill="#b0b0b0"/><rect x="237.0" y="873.6" width="74.1" height="0.8" fill="#b0b0b0"/><rect x="237.0" y="876.9" width="83.5" height="0.8" fill="#b0b0b0"/><circle cx="182" cy="878" r="17" fill="none" stroke="#9cc8a8" stroke-width="0.8"/><circle cx="182" cy="878" r="13" fill="none" stroke="#b8dcc0" stroke-width="0.6"/></g><rect x="72" y="332" width="54" height="2" fill="#888"/></svg>
<svg class="a" style="left:199px;top:887px" width="17" height="16" viewBox="0 0 17 16"><path d="M8.5 0V16M0 8H17" stroke="#3d4560" stroke-width="1.8"/></svg>
<div class="a" style="left:403px;top:664px;width:8px;height:54px;border-radius:4px;background:#cfd0d4"></div>
<!-- canvas -->
<div class="a" style="left:416px;top:291px;width:990px;height:621px;background:#f3f4f6"></div>
<div class="a" style="left:437px;top:320px;width:935px;height:526px;background:#fff;box-shadow:0 0 3px 2px rgba(0,0,0,.16)"></div>
<svg class="a" style="left:437px;top:320px;overflow:visible" width="935" height="526" viewBox="0 0 935 526"><use href="#slide"/></svg>
<svg class="a" style="left:660px;top:585px" width="30" height="34" viewBox="660 585 30 34"><g fill="#000" stroke="#fff" stroke-width="0.6"><path d="M674.5 589L678 593.5H675.3V595H673.7V593.5H671Z"/><path d="M666 597.5L670 594V596.7H672.3V598.3H670V601Z"/><path d="M683.5 597.5L679.5 594V596.7H677.2V598.3H679.5V601Z"/></g><path d="M674.5 597.5V612L677.8 608.6L680.6 615.6L683 614.6L680.3 607.8H684.8Z" fill="#fff" stroke="#000" stroke-width="1.1" stroke-linejoin="miter"/></svg>
<div class="a" style="left:1394px;top:295px;width:12px;height:573px;background:#cbccd0"></div>
<svg class="a" style="left:1396px;top:300px" width="8" height="6" viewBox="0 0 8 6"><path d="M0 6L4 1L8 6Z" fill="#8c8ea0"/></svg>
<svg class="a" style="left:1396px;top:857px" width="8" height="6" viewBox="0 0 8 6"><path d="M0 0L4 5L8 0Z" fill="#8c8ea0"/></svg>
<div class="a" style="left:416px;top:869px;width:978px;height:11px;background:#dcdde1"></div>
<div class="a" style="left:430px;top:869px;width:858px;height:11px;background:#c6c7cb"></div>
<svg class="a" style="left:423px;top:871px" width="6" height="8" viewBox="0 0 6 8"><path d="M6 0L1 4L6 8Z" fill="#8c8ea0"/></svg>
<svg class="a" style="left:1382px;top:871px" width="6" height="8" viewBox="0 0 6 8"><path d="M0 0L5 4L0 8Z" fill="#8c8ea0"/></svg>
<div class="t" style="left:448px;top:886px;font-size:11px;color:#555">单击此处添加备注</div>
<!-- right tools -->
<div class="a" style="left:1406px;top:291px;width:1px;height:621px;background:#e2e3e6"></div>
<div class="a" style="left:1407px;top:291px;width:43px;height:621px;background:#f3f4f6"></div>
<svg class="a" style="left:1407px;top:291px" width="43" height="621" viewBox="1407 291 43 621" fill="none" stroke="#444" stroke-width="1.2">
 <path d="M1418 301.5H1439M1418 304.5H1439" stroke="#d4d5d8"/>
 <path d="M1424 330H1436M1420 339H1430"/><circle cx="1421.5" cy="330" r="2"/><circle cx="1432.5" cy="339" r="2"/>
 <path d="M1428 363L1430.5 368.5L1436 369L1432 373L1433 378.5L1428 375.5L1423 378.5L1424 373L1420 369L1425.5 368.5Z"/><path d="M1419 379L1422 376M1421 382L1424 379" />
 <path d="M1420 400H1436V412H1430M1420 400V412H1423M1425 414L1428 412L1425 409" />
 <path d="M1420 448V437H1436V441M1420 448H1426M1422 444L1425 440L1428 443L1431 439"/><path d="M1431 449C1429 449 1429 445 1432 443C1432 445 1435 445 1435 449Z" />
 <path d="M1422 475A7.5 7.5 0 1 1 1421 484M1420 473V477H1424M1428 476V481L1431 483"/>
 <path d="M1428 509L1435 512.5V520L1428 523.5L1421 520V512.5Z M1421 512.5L1428 516L1435 512.5M1428 516V523.5" stroke="#c8c9cc"/>
 <circle cx="1423" cy="893" r="2" stroke-width="1.3"/><circle cx="1429" cy="893" r="2" stroke-width="1.3"/><circle cx="1435" cy="893" r="2" stroke-width="1.3"/>
</svg>
<!-- status bar -->
<div class="a" style="left:0;top:912px;width:1451px;height:25px;background:#f4f5f7;border-top:1px solid #e1e2e6;border-radius:0 0 8px 8px"></div>
<div class="t st" style="left:13px;top:919px">幻灯片 16 / 23</div>
<div class="t st" style="left:125px;top:919px">Office Theme</div>
<svg class="a" style="left:233px;top:918px" width="14" height="15" viewBox="0 0 14 15" fill="none" stroke="#888" stroke-width="1.1"><path d="M7 1L13 3.5V8C13 11 10 13.5 7 14.5C4 13.5 1 11 1 8V3.5Z"/><path d="M4.8 5.5L9.2 10M9.2 5.5L4.8 10"/></svg>
<div class="t st" style="left:252px;top:919px;color:#4e9c3a">文档未保护</div>
<div class="a" style="left:333px;top:919px;width:13px;height:13px;border-radius:50%;background:#5cb85c"></div>
<div class="a" style="left:337px;top:923px;width:5px;height:5px;border-radius:50%;background:#fff"></div>
<div class="t st" style="left:352px;top:920px">本地备份开</div>
<svg class="a" style="left:700px;top:912px" width="750" height="25" viewBox="700 912 750 25" fill="none" stroke="#555" stroke-width="1.2">
 <path d="M714.5 918L721 921.5V929L714.5 932.5L708 929V921.5Z M708 921.5L714.5 925L721 921.5M714.5 925V932.5"/>
 <path d="M787 927L789.5 923.5L792 927Z" fill="#666" stroke="none"/>
 <path d="M806 922H812M806 926H820M806 930H820M814 918L816 922L818 918" />
 <path d="M855 923L857.5 926.5L860 923Z" fill="#666" stroke="none"/>
 <path d="M880 920H887M893 920V930H886L882 933V930H880V920 M892 917V923M889 920H895"/>
 <path d="M946 919H963V932H946Z M950 919V932M950 925H963" />
 <path d="M974 919H981V926H974ZM984 919H991V926H984ZM974 928H981V934H974ZM984 928H991V934H984Z" stroke-width="1.1"/>
 <path d="M999 920C1002 919 1005 919 1007 921C1009 919 1012 919 1015 920V933C1012 932 1009 932 1007 934C1005 932 1002 932 999 933Z M1007 921V934"/>
 <path d="M1038 921H1052V933H1038Z M1041 921V918H1047L1049 921"/><circle cx="1046" cy="927" r="2.5"/>
 <path d="M1104 922L1107 926L1110 922Z" fill="#666" stroke="none"/>
 <path d="M1128 922V918H1132M1140 918H1144V922M1144 930V934H1140M1132 934H1128V930M1132 922H1140V930H1132Z"/>
 <path d="M1219 922L1222 926L1225 922Z" fill="#777" stroke="none"/>
 <path d="M1235 925.5H1247" stroke="#333" stroke-width="2"/>
 <path d="M1270 925.5H1384" stroke="#4a4a5a" stroke-width="2"/>
 <circle cx="1302" cy="925.5" r="5" fill="#fdfdfd" stroke="#555"/>
 <path d="M1407 925.5H1420M1413.5 919V932" stroke="#333" stroke-width="2"/>
</svg>
<div class="a" style="left:943px;top:913px;width:23px;height:23px;background:#e2e3e7"></div>
<svg class="a" style="left:943px;top:912px" width="23" height="25" viewBox="943 912 23 25" fill="none" stroke="#555" stroke-width="1.2"><path d="M946 919H963V932H946Z M950 919V932M950 925H963"/></svg>
<div class="t st" style="left:728px;top:919px;font-size:13px">智能美化</div>
<div class="t st" style="left:825px;top:919px;font-size:13px">备注</div>
<div class="t st" style="left:899px;top:919px;font-size:13px">批注</div>
<div class="a" style="left:1069px;top:913px;width:31px;height:24px;background:#f37650"></div>
<svg class="a" style="left:1079px;top:917px" width="11" height="15" viewBox="0 0 11 15"><path d="M0 0L11 7.5L0 15Z" fill="#fff"/></svg>
<div class="t st" style="left:1169px;top:919px;font-size:13px">64%</div>
<div id="rp" class="a">
  <div class="a" style="left:0;top:0;width:2px;height:1080px;background:#e4e4e6"></div>
  <!-- tabs -->
  <div class="a" style="left:2px;top:0;width:467px;height:36px;background:#edeef2;border-top:1px solid #d4d5d8;border-bottom:2px solid #d6d7da"></div>
  <div class="a" style="left:215px;top:1px;width:219px;height:34px;background:#fff;border-left:1px solid #d9dadd;border-right:1px solid #d9dadd"></div>
  <svg class="a" style="left:7px;top:10px" width="18" height="18" viewBox="0 0 18 18"><rect x="0.5" y="1" width="16" height="13" rx="2" fill="#9a9ca0"/><path d="M11 13 L13 17 L15 13Z" fill="#9a9ca0"/><circle cx="4.5" cy="7.5" r="1.3" fill="#fff"/><circle cx="8.5" cy="7.5" r="1.3" fill="#fff"/><circle cx="12.5" cy="7.5" r="1.3" fill="#fff"/></svg>
  <div class="t" style="left:30px;top:10px;font-size:16px;color:#222">聊天</div>
  <svg class="a" style="left:223px;top:9px" width="20" height="18" viewBox="0 0 20 18"><circle cx="8.5" cy="5" r="4" fill="#9a9ca0"/><path d="M0.5 17 C1 11 4 9.5 8.5 9.5 C13 9.5 16 11 16.5 17Z" fill="#9a9ca0"/></svg>
  <div class="t" style="left:246px;top:10px;font-size:16px;color:#222">成员(278)</div>
  <svg class="a" style="left:390px;top:14px" width="22" height="8" viewBox="0 0 22 8"><circle cx="4" cy="4" r="1.6" fill="#222"/><circle cx="11" cy="4" r="1.6" fill="#222"/><circle cx="18" cy="4" r="1.6" fill="#222"/></svg>
  <svg class="a" style="left:413px;top:12px" width="13" height="13" viewBox="0 0 13 13"><path d="M1 1L12 12M12 1L1 12" stroke="#222" stroke-width="1.6"/></svg>
  <svg class="a" style="left:443px;top:13px" width="12" height="10" viewBox="0 0 12 10"><path d="M1 1.5H11M1 5H11M1 8.5H11" stroke="#a8a9ad" stroke-width="1.3"/></svg>
  <!-- search -->
  <div class="a" style="left:15px;top:41px;width:439px;height:37px;border:1px solid #c2c6d2;border-radius:3px;background:#fff"></div>
  <svg class="a" style="left:24px;top:53px" width="16" height="16" viewBox="0 0 16 16"><circle cx="6.5" cy="6.5" r="5" fill="none" stroke="#7a7e8c" stroke-width="2"/><path d="M10.5 10.5L14 14" stroke="#7a7e8c" stroke-width="2.2" stroke-linecap="round"/></svg>
  <div class="t" style="left:45px;top:52px;font-size:15px;color:#8a8a8a">搜索成员</div>
  <!-- list -->
  <div class="a" style="left:0;top:79px;width:469px;height:926px;overflow:hidden">
   <div class="a" style="left:0;top:-79px;width:469px;height:1080px">
<svg class="av" style="top:102px" width="38" height="38" viewBox="0 0 38 38"><defs><clipPath id="avc0"><circle cx="19" cy="19" r="19"/></clipPath></defs><g clip-path="url(#avc0)"><rect width="38" height="38" fill="#c9a27c"/><path d="M0 10L10 0M0 24L24 0M0 38L38 0M10 38L38 10M24 38L38 24M0 14L24 38M0 0L38 38M14 0L38 24" stroke="#5e3a26" stroke-width="3"/><ellipse cx="19" cy="11" rx="11" ry="8" fill="#2a221e"/><ellipse cx="19" cy="21" rx="8" ry="9" fill="#dcb096"/><rect x="6" y="29" width="26" height="9" fill="#d8c4b0"/><ellipse cx="22" cy="27" rx="5" ry="4" fill="#c89a78"/></g></svg>
<div class="nm" style="top:113px">20</div>
<svg class="a" style="left:389px;top:101px" width="60" height="40" viewBox="0 0 60 40"><use href="#ic"/></svg>
<svg class="av" style="top:157px" width="38" height="38" viewBox="0 0 38 38"><defs><clipPath id="avc1"><circle cx="19" cy="19" r="19"/></clipPath></defs><g clip-path="url(#avc1)"><rect width="38" height="38" fill="#56675a"/><rect x="0" y="0" width="12" height="38" fill="#6a7866"/><ellipse cx="22" cy="17" rx="7" ry="9" fill="#e2c6b0"/><path d="M24 6C32 6 34 14 32 24L28 30L27 14Z" fill="#2c2420"/><path d="M10 38C12 28 18 26 24 28C30 30 32 34 32 38Z" fill="#e0b89a"/></g></svg>
<div class="nm" style="top:168px">20</div>
<svg class="a" style="left:389px;top:156px" width="60" height="40" viewBox="0 0 60 40"><use href="#ic"/></svg>
<svg class="av" style="top:212px" width="38" height="38" viewBox="0 0 38 38"><defs><clipPath id="avc2"><circle cx="19" cy="19" r="19"/></clipPath></defs><g clip-path="url(#avc2)"><rect width="38" height="38" fill="#1a1a1a"/><ellipse cx="23" cy="17" rx="9" ry="10" fill="#f2ecec"/><path d="M8 4C18 -2 32 2 32 10L28 8L18 8L14 30L6 30Z" fill="#0e0e0e"/><circle cx="20" cy="17" r="1.8" fill="#3a70d0"/><circle cx="27" cy="17" r="1.8" fill="#3a70d0"/><path d="M12 38C14 28 22 26 30 28L34 38Z" fill="#6a6a6a"/><rect x="32" y="14" width="6" height="14" fill="#d8d0d0"/></g></svg>
<div class="nm" style="top:223px">20</div>
<svg class="a" style="left:389px;top:211px" width="60" height="40" viewBox="0 0 60 40"><use href="#ic"/></svg>
<svg class="av" style="top:267px" width="38" height="38" viewBox="0 0 38 38"><defs><clipPath id="avc3"><circle cx="19" cy="19" r="19"/></clipPath></defs><g clip-path="url(#avc3)"><rect width="38" height="38" fill="#252826"/><ellipse cx="19" cy="20" rx="11" ry="10" fill="#e8e2d8"/><ellipse cx="11" cy="10" rx="4" ry="8" fill="#e0dad0"/><ellipse cx="27" cy="10" rx="4" ry="8" fill="#e0dad0"/><path d="M12 21H26" stroke="#333" stroke-width="1.5"/><path d="M2 38L6 28L19 31L32 28L36 38Z" fill="#a8784a"/></g></svg>
<div class="nm" style="top:278px">20</div>
<svg class="a" style="left:389px;top:266px" width="60" height="40" viewBox="0 0 60 40"><use href="#ic"/></svg>
<svg class="av" style="top:322px" width="38" height="38" viewBox="0 0 38 38"><defs><clipPath id="avc4"><circle cx="19" cy="19" r="19"/></clipPath></defs><g clip-path="url(#avc4)"><rect width="38" height="38" fill="#1c1c1a"/><rect x="22" y="0" width="16" height="38" fill="#3a3a36"/><rect x="0" y="0" width="38" height="4" fill="#c07a3a"/><ellipse cx="22" cy="10" rx="4.5" ry="5.5" fill="#d8b098"/><path d="M8 38C8 22 14 16 22 16C30 16 36 22 36 38Z" fill="#e8e4de"/></g></svg>
<div class="nm" style="top:333px">2022级市政0031班陈永兴</div>
<svg class="a" style="left:389px;top:321px" width="60" height="40" viewBox="0 0 60 40"><use href="#ic"/></svg>
<svg class="av" style="top:377px" width="38" height="38" viewBox="0 0 38 38"><defs><clipPath id="avc5"><circle cx="19" cy="19" r="19"/></clipPath></defs><g clip-path="url(#avc5)"><rect width="38" height="38" fill="#9e9ea2"/><rect x="0" y="16" width="38" height="22" fill="#e8e8ec"/><path d="M0 18H38M0 24H38M0 30H38M0 36H38M4 14V38M10 14V38M16 14V38M22 14V38M28 14V38M34 14V38" stroke="#2a3a70" stroke-width="3" stroke-dasharray="3 3"/><ellipse cx="8" cy="17" rx="7" ry="6" fill="#2a2422"/><path d="M14 16C22 12 30 14 36 20L30 24L16 22Z" fill="#d8b8a0"/></g></svg>
<div class="nm" style="top:388px">2022级市政0031刘俊超</div>
<svg class="a" style="left:389px;top:376px" width="60" height="40" viewBox="0 0 60 40"><use href="#ic"/></svg>
<svg class="av" style="top:432px" width="38" height="38" viewBox="0 0 38 38"><defs><clipPath id="avc6"><circle cx="19" cy="19" r="19"/></clipPath></defs><g clip-path="url(#avc6)"><rect width="38" height="38" fill="#7a88a8"/><path d="M0 0H30C26 10 14 18 0 22Z" fill="#d92f2a"/><path d="M5 4L6.3 7.5H10L7 9.5L8 13L5 11L2 13L3 9.5L0 7.5H3.7Z" fill="#ffd23a"/><circle cx="14" cy="5" r="1.2" fill="#ffd23a"/><circle cx="16" cy="10" r="1.2" fill="#ffd23a"/><rect x="0" y="22" width="38" height="16" fill="#5a6a8a"/><ellipse cx="20" cy="26" rx="4" ry="5" fill="#e8d0c0"/><path d="M14 38C15 30 25 30 26 38Z" fill="#3a3a50"/><rect x="26" y="12" width="12" height="14" fill="#a0b0c8"/></g></svg>
<div class="nm" style="top:443px">2022级市政0031杨林山</div>
<svg class="a" style="left:389px;top:431px" width="60" height="40" viewBox="0 0 60 40"><use href="#ic"/></svg>
<svg class="av" style="top:487px" width="38" height="38" viewBox="0 0 38 38"><defs><clipPath id="avc7"><circle cx="19" cy="19" r="19"/></clipPath></defs><g clip-path="url(#avc7)"><rect width="38" height="38" fill="#a8d2e2"/><rect x="26" y="0" width="12" height="20" fill="#6aa870"/><path d="M6 38C6 24 12 14 20 14C28 14 32 24 32 38Z" fill="#2f86cc"/><ellipse cx="20" cy="11" rx="5" ry="5" fill="#d0b8a8"/><rect x="8" y="6" width="20" height="4" fill="#404858"/></g></svg>
<div class="nm" style="top:498px">2022级市政0031杨强</div>
<svg class="a" style="left:389px;top:486px" width="60" height="40" viewBox="0 0 60 40"><use href="#ic"/></svg>
<svg class="av" style="top:542px" width="38" height="38" viewBox="0 0 38 38"><defs><clipPath id="avc8"><circle cx="19" cy="19" r="19"/></clipPath></defs><g clip-path="url(#avc8)"><rect width="38" height="38" fill="#f3ebe4"/><path d="M8 6C14 0 26 2 30 10C34 18 34 30 30 38H22L22 16L12 16L8 28Z" fill="#caa086"/><ellipse cx="17" cy="20" rx="5" ry="6" fill="#f8eee8"/><path d="M6 30L18 24L14 38H4Z" fill="#e0a090"/></g></svg>
<div class="nm" style="top:553px">2022级室内0032彭正言</div>
<svg class="a" style="left:389px;top:541px" width="60" height="40" viewBox="0 0 60 40"><use href="#ic"/></svg>
<svg class="av" style="top:597px" width="38" height="38" viewBox="0 0 38 38"><defs><clipPath id="avc9"><circle cx="19" cy="19" r="19"/></clipPath></defs><g clip-path="url(#avc9)"><rect width="38" height="38" fill="#1a1f2a"/><ellipse cx="19" cy="12" rx="6" ry="7" fill="#c8a088"/><path d="M16 6C18 0 26 2 25 10L22 6Z" fill="#101010"/><path d="M4 38C6 26 12 22 19 22C26 22 32 26 34 38Z" fill="#d28c4e"/><path d="M10 24L18 38" stroke="#2a2a30" stroke-width="2"/><rect x="28" y="18" width="10" height="20" fill="#9ab0c8"/></g></svg>
<div class="nm" style="top:608px">2022级室内设计0031班陈淘</div>
<svg class="a" style="left:389px;top:596px" width="60" height="40" viewBox="0 0 60 40"><use href="#ic"/></svg>
<svg class="av" style="top:652px" width="38" height="38" viewBox="0 0 38 38"><defs><clipPath id="avc10"><circle cx="19" cy="19" r="19"/></clipPath></defs><g clip-path="url(#avc10)"><rect width="38" height="38" fill="#ebe9e8"/><rect x="3" y="2" width="32" height="4" fill="#222"/><path d="M8 12L14 8L19 12L24 8L30 12L28 18L10 18Z" fill="#1e1e1e"/><path d="M10 12L14 10L18 14M22 12L28 10" stroke="#e0a820" stroke-width="3"/><ellipse cx="19" cy="24" rx="7" ry="8" fill="#6a4a38"/><path d="M6 38C8 32 14 30 19 30C24 30 30 32 32 38Z" fill="#2a2a2a"/></g></svg>
<div class="nm" style="top:663px">2022级室内设计0033曾久久</div>
<svg class="a" style="left:389px;top:651px" width="60" height="40" viewBox="0 0 60 40"><use href="#ic"/></svg>
<svg class="av" style="top:707px" width="38" height="38" viewBox="0 0 38 38"><defs><clipPath id="avc11"><circle cx="19" cy="19" r="19"/></clipPath></defs><g clip-path="url(#avc11)"><rect width="38" height="38" fill="#d0d8ec"/><path d="M4 38C2 20 10 6 22 6C34 6 36 24 34 38Z" fill="#8f7cc2"/><ellipse cx="24" cy="14" rx="7" ry="8" fill="#d8d0ee"/><path d="M2 20L12 16L10 32L2 34Z" fill="#3a4690"/><rect x="12" y="26" width="14" height="6" fill="#202030"/></g></svg>
<div class="nm" style="top:718px">2022级室内设计0033代岭</div>
<svg class="a" style="left:389px;top:706px" width="60" height="40" viewBox="0 0 60 40"><use href="#ic"/></svg>
<svg class="av" style="top:762px" width="38" height="38" viewBox="0 0 38 38"><defs><clipPath id="avc12"><circle cx="19" cy="19" r="19"/></clipPath></defs><g clip-path="url(#avc12)"><rect width="38" height="38" fill="#d6c6aa"/><ellipse cx="22" cy="15" rx="8" ry="9" fill="#d8b8a0"/><path d="M14 6C18 2 28 2 30 8L30 12L14 12Z" fill="#2a2624"/><rect x="15" y="13" width="14" height="4" rx="2" fill="#1a1a1a"/><path d="M6 38C8 28 14 26 22 26C30 26 34 30 36 38Z" fill="#242220"/><ellipse cx="9" cy="24" rx="3" ry="5" fill="#e0c0a0"/></g></svg>
<div class="nm" style="top:773px">2022级室内设计0033段舒淇</div>
<svg class="a" style="left:389px;top:761px" width="60" height="40" viewBox="0 0 60 40"><use href="#ic"/></svg>
<svg class="av" style="top:817px" width="38" height="38" viewBox="0 0 38 38"><defs><clipPath id="avc13"><circle cx="19" cy="19" r="19"/></clipPath></defs><g clip-path="url(#avc13)"><rect width="38" height="38" fill="#e8dcd8"/><path d="M0 0H20L16 38H0Z" fill="#3a3232"/><ellipse cx="11" cy="18" rx="7" ry="9" fill="#f0dcd0"/><path d="M16 4C26 0 36 6 36 18L34 38H18Z" fill="#2e2828"/><ellipse cx="25" cy="21" rx="8" ry="10" fill="#f4e4dc"/><path d="M16 34C20 30 30 30 34 38H16Z" fill="#f8f8f8"/></g></svg>
<div class="nm" style="top:828px">2022级室内设计0033李小倩</div>
<svg class="a" style="left:389px;top:816px" width="60" height="40" viewBox="0 0 60 40"><use href="#ic"/></svg>
<svg class="av" style="top:872px" width="38" height="38" viewBox="0 0 38 38"><defs><clipPath id="avc14"><circle cx="19" cy="19" r="19"/></clipPath></defs><g clip-path="url(#avc14)"><rect width="38" height="38" fill="#4c5a72"/><rect x="0" y="0" width="10" height="38" fill="#6a5a50"/><ellipse cx="19" cy="16" rx="8" ry="8" fill="#e2a27c"/><path d="M11 12C12 4 26 4 27 12Z" fill="#e0c8a0"/><path d="M6 38C8 28 14 26 19 26C24 26 30 28 32 38Z" fill="#2a3040"/></g></svg>
<div class="nm" style="top:883px">2022级室内设计0033李洋</div>
<svg class="a" style="left:389px;top:871px" width="60" height="40" viewBox="0 0 60 40"><use href="#ic"/></svg>
<svg class="av" style="top:927px" width="38" height="38" viewBox="0 0 38 38"><defs><clipPath id="avc15"><circle cx="19" cy="19" r="19"/></clipPath></defs><g clip-path="url(#avc15)"><rect width="38" height="38" fill="#ece8ee"/><path d="M4 36C2 14 10 2 20 2C30 2 34 14 30 38Z" fill="#2a2626"/><ellipse cx="18" cy="17" rx="7" ry="9" fill="#f0dcd4"/><path d="M18 38C20 28 26 24 34 26L36 38Z" fill="#c6aee2"/><rect x="28" y="20" width="6" height="8" fill="#e0c0b0"/></g></svg>
<div class="nm" style="top:938px">2022级室内设计0033刘守芳</div>
<svg class="a" style="left:389px;top:926px" width="60" height="40" viewBox="0 0 60 40"><use href="#ic"/></svg>
<svg class="av" style="top:982px" width="38" height="38" viewBox="0 0 38 38"><defs><clipPath id="avc16"><circle cx="19" cy="19" r="19"/></clipPath></defs><g clip-path="url(#avc16)"><rect width="38" height="38" fill="#5c8c4c"/><circle cx="8" cy="10" r="8" fill="#4a7a40"/><circle cx="30" cy="26" r="9" fill="#7aa868"/><ellipse cx="22" cy="14" rx="6" ry="7" fill="#e6d0c0"/><path d="M12 38C14 28 18 24 22 24C28 24 32 30 32 38Z" fill="#3a3a3a"/><circle cx="8" cy="30" r="4" fill="#8a78b0"/></g></svg>
<div class="nm" style="top:993px">2022级室内设计0033刘鑫</div>
<svg class="a" style="left:389px;top:981px" width="60" height="40" viewBox="0 0 60 40"><use href="#ic"/></svg>   </div>
  </div>
  <div class="a" style="left:2px;top:1005px;width:467px;height:1px;background:#e6e6e8"></div>
  <div class="a" style="left:129px;top:1030px;width:120px;height:25px;border:1px solid #a9abb8;border-radius:2px;background:#fff"></div>
  <div class="t" style="left:159px;top:1035px;font-size:15px;color:#222">解除静音</div>
  <div class="a" style="left:269px;top:1030px;width:90px;height:25px;border:1px solid #a9abb8;border-radius:2px;background:#fff"></div>
  <div class="t" style="left:299px;top:1035px;font-size:15px;color:#222">改名</div>
</div>
<div class="a" style="left:1535px;top:75px;width:305px;height:219px;background:#1c1e22">
  <div class="a" style="left:0;top:0;width:305px;height:45px;background:#2d3034"></div>
  <svg class="a" style="left:10px;top:10px" width="26" height="26" viewBox="0 0 26 26"><rect x="9" y="3" width="8" height="13" rx="4" fill="#8a8c90"/><path d="M6 12a7 7 0 0 0 14 0" fill="none" stroke="#8a8c90" stroke-width="1.5"/><path d="M13 19V22M9.5 22.5H16.5" stroke="#8a8c90" stroke-width="1.5"/><path d="M4 22L21 5" stroke="#e85050" stroke-width="1.6"/></svg>
  <div class="a" style="left:45px;top:10px;width:1px;height:24px;background:#111"></div>
  <div class="t" style="left:57px;top:15px;font-size:15px;color:#fff">正在讲话: 张帅;</div>
  <svg class="a" style="left:228px;top:4px" width="66" height="40" viewBox="0 0 66 40"><defs><linearGradient id="lg1" x1="0" y1="1" x2="1" y2="0"><stop offset="0" stop-color="#34373b"/><stop offset="1" stop-color="#55575b"/></linearGradient><linearGradient id="lg2" x1="0" y1="1" x2="1" y2="0"><stop offset="0" stop-color="#45474b"/><stop offset="1" stop-color="#5e6064"/></linearGradient></defs><rect x="12" y="6" width="24" height="24" rx="4" transform="rotate(45 24 18)" fill="url(#lg1)"/><rect x="31" y="8" width="24" height="24" rx="4" transform="rotate(45 43 20)" fill="url(#lg2)"/></svg>
  <div class="a" style="left:4px;top:48px;width:299px;height:168px;background:#2b2e32"></div>
<svg class="a" style="left:110px;top:76px" width="84" height="84" viewBox="0 0 84 84"><defs><clipPath id="vc"><circle cx="42" cy="42" r="42"/></clipPath><linearGradient id="vw" x1="0" y1="0" x2="0" y2="1"><stop offset="0" stop-color="#3a6a9a"/><stop offset="1" stop-color="#1c3a6a"/></linearGradient></defs><g clip-path="url(#vc)"><rect width="84" height="84" fill="url(#vw)"/><path d="M0 0H84V30C70 28 60 34 50 30C40 26 30 32 20 30C10 28 4 32 0 30Z" fill="#1e3a48"/><circle cx="20" cy="14" r="14" fill="#2a4a58"/><circle cx="55" cy="12" r="16" fill="#24444e"/><circle cx="78" cy="20" r="10" fill="#2a4a5a"/><rect x="0" y="30" width="84" height="12" fill="#2a4a6a"/><path d="M8 34H70" stroke="#4a6a8a" stroke-width="2" stroke-dasharray="3 2"/><path d="M0 44H84V84H0Z" fill="#2c5a8c" opacity=".6"/><ellipse cx="42" cy="42" rx="3" ry="6" fill="#e8eef4"/><circle cx="42" cy="35" r="2" fill="#f0f0f0"/><path d="M41 48L40 58M43 48L44 58" stroke="#c8d4e0" stroke-width="1.2"/><path d="M38 64L46 64L44 78L40 78Z" fill="#8aa8c8" opacity=".5"/><rect x="76" y="0" width="8" height="84" fill="#10141c" opacity=".7"/></g></svg>
<div class="a" style="left:4px;top:188px;width:61px;height:28px;background:#1e2024;border-radius:0 6px 0 0"></div>
  <svg class="a" style="left:10px;top:193px" width="16" height="20" viewBox="0 0 16 20"><rect x="5" y="0" width="6" height="12" rx="3" fill="#fff"/><rect x="5" y="8" width="6" height="4" fill="#4cd964"/><path d="M2 9a6 6 0 0 0 12 0" fill="none" stroke="#fff" stroke-width="1.5"/><path d="M8 15V18M5 18.5H11" stroke="#fff" stroke-width="1.5"/></svg>
  <div class="t" style="left:31px;top:197px;font-size:14px;color:#fff">张帅</div>
</div>
<div class="a" style="left:0;top:1050px;width:172px;height:30px;background:#1b1d20;border-radius:0 6px 0 0"></div>
<svg class="a" style="left:1px;top:1056px" width="18" height="20" viewBox="0 0 18 20"><rect x="0" y="0" width="18" height="14" rx="1" fill="#fff"/><path d="M5 10C6 6 9 5 12 5V3L15 6L12 9V7C9 7 7 8 5 10Z" fill="#1b1d20"/><rect x="4" y="16" width="10" height="2" fill="#fff"/></svg>
<svg class="a" style="left:25px;top:1055px" width="16" height="22" viewBox="0 0 16 22"><rect x="5" y="0" width="6" height="13" rx="3" fill="#fff"/><rect x="5" y="9" width="6" height="4" fill="#4cd964"/><path d="M2 10a6 6 0 0 0 12 0" fill="none" stroke="#fff" stroke-width="1.5"/><path d="M8 16V19M5 19.5H11" stroke="#fff" stroke-width="1.5"/></svg>
<div class="t" style="left:48px;top:1057px;font-size:17px;color:#fff">张帅的屏幕共享</div>

</body></html>
